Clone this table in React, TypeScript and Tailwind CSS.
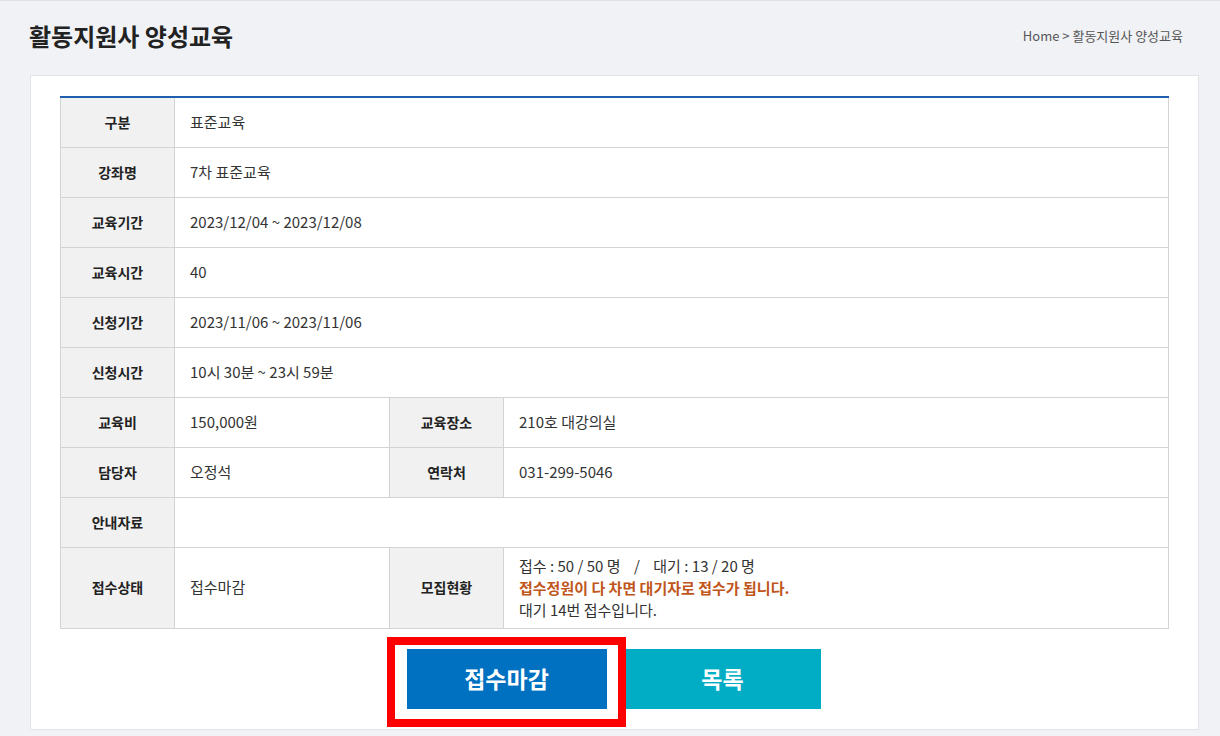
const rows2: [string, string][] = [
  ['구분', '표준교육'],
  ['강좌명', '7차 표준교육'],
  ['교육기간', '2023/12/04 ~ 2023/12/08'],
  ['교육시간', '40'],
  ['신청기간', '2023/11/06 ~ 2023/11/06'],
  ['신청시간', '10시 30분 ~ 23시 59분'],
];

const th = 'border border-[#d3d3d3] bg-[#f1f1f1] text-center text-[14px] font-bold text-[#222]';
const td = 'border border-[#d3d3d3] pl-[15px] text-[15px] text-[#333]';

export default function App() {
  return (
    <div
      className="min-h-[736px] bg-[#f1f2f6] border-t border-[#e2e2e6] text-[14px]"
      style={{ fontFamily: '"Noto Sans CJK KR", "Noto Sans", sans-serif' }}
    >
      <header className="flex h-[74px] items-center justify-between pb-[5px] pl-[29px] pr-[37px]">
        <h1 className="text-[24px] font-bold text-[#222]">활동지원사 양성교육</h1>
        <div className="text-[13px] text-[#555]">Home &gt; 활동지원사 양성교육</div>
      </header>

      <div className="ml-[30px] w-[1169px] border border-[#e3e4e8] bg-white px-[29px] pt-[20px] pb-[20px]">
        <table className="w-[1109px] table-fixed border-collapse border-t-2 border-t-[#1f5fae]">
          <colgroup>
            <col className="w-[114px]" />
            <col className="w-[215px]" />
            <col className="w-[114px]" />
            <col />
          </colgroup>
          <tbody>
            {rows2.map(([k, v]) => (
              <tr key={k} className="h-[50px]">
                <th className={th}>{k}</th>
                <td className={td} colSpan={3}>{v}</td>
              </tr>
            ))}
            <tr className="h-[50px]">
              <th className={th}>교육비</th>
              <td className={td}>150,000원</td>
              <th className={th}>교육장소</th>
              <td className={td}>210호 대강의실</td>
            </tr>
            <tr className="h-[50px]">
              <th className={th}>담당자</th>
              <td className={td}>오정석</td>
              <th className={th}>연락처</th>
              <td className={td}>031-299-5046</td>
            </tr>
            <tr className="h-[50px]">
              <th className={th}>안내자료</th>
              <td className={td} colSpan={3}></td>
            </tr>
            <tr className="h-[81px]">
              <th className={th}>접수상태</th>
              <td className={td}>접수마감</td>
              <th className={th}>모집현황</th>
              <td className={`${td} leading-[22px]`}>
                <div className="whitespace-pre">{'접수 : 50 / 50 명    /    대기 : 13 / 20 명'}</div>
                <div className="font-bold text-[#c0561c]">접수정원이 다 차면 대기자로 접수가 됩니다.</div>
                <div>대기 14번 접수입니다.</div>
              </td>
            </tr>
          </tbody>
        </table>

        <div className="mt-[20px] flex justify-center pr-[2px]">
          <div className="relative">
            <button className="h-[60px] w-[200px] bg-[#0070c0] text-[23px] font-semibold text-white">접수마감</button>
            <span className="pointer-events-none absolute -left-[20px] -top-[12px] h-[90px] w-[239px] border-[8px] border-[#ff0000]" />
          </div>
          <button className="ml-[18px] h-[60px] w-[196px] bg-[#00adc5] text-[23px] font-semibold text-white">목록</button>
        </div>
      </div>
    </div>
  );
}
